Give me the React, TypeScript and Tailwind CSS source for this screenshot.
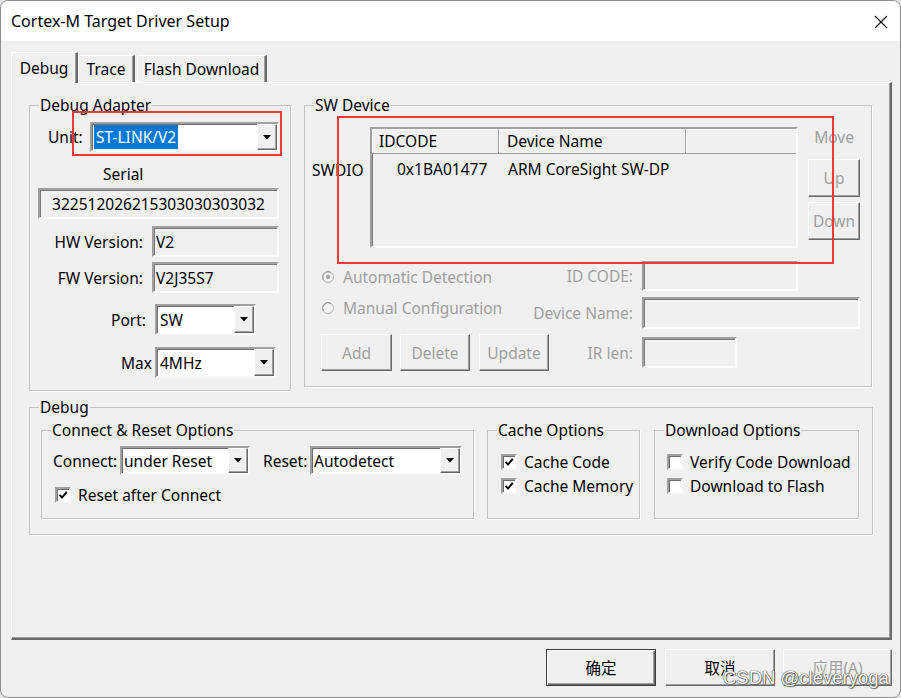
import React from "react";

type P = { className?: string; children?: React.ReactNode };

function Arrow() {
  return (
    <svg width="8" height="5" viewBox="0 0 8 5">
      <polygon points="0,0 8,0 4,4.5" fill="#000" />
    </svg>
  );
}

function Combo({ className = "", children }: P) {
  return (
    <div
      className={`flex items-stretch bg-white border-2 border-t-[#a0a0a0] border-l-[#a0a0a0] border-r-[#f7f7f7] border-b-[#f7f7f7] shadow-[inset_1px_1px_0_#6d6d6d] ${className}`}
    >
      <div className="flex-1 flex items-center pl-[2px] whitespace-nowrap overflow-hidden leading-[20px]">
        {children}
      </div>
      <div className="w-[20px] flex items-center justify-center bg-[#f0f0f0] border border-t-white border-l-white border-r-[#696969] border-b-[#696969] shadow-[inset_-1px_-1px_0_#a0a0a0]">
        <Arrow />
      </div>
    </div>
  );
}

function Field({ className = "", children }: P) {
  return (
    <div
      className={`flex items-center bg-[#f0f0f0] border-2 border-t-[#a0a0a0] border-l-[#a0a0a0] border-r-[#fbfbfb] border-b-[#fbfbfb] shadow-[inset_1px_1px_0_#7a7a7a] whitespace-nowrap overflow-hidden leading-[20px] ${className}`}
    >
      {children}
    </div>
  );
}

function Btn({ className = "", children }: P) {
  return (
    <div
      className={`flex items-center justify-center bg-[#f0f0f0] border border-t-white border-l-white border-r-[#696969] border-b-[#696969] shadow-[inset_-1px_-1px_0_#a0a0a0] leading-[20px] whitespace-nowrap ${className}`}
    >
      {children}
    </div>
  );
}

function Group({ label, className = "", children }: P & { label: string }) {
  return (
    <div className={`relative border border-[#c3c3c3] shadow-[1px_1px_0_#ffffff] ${className}`}>
      <span className="absolute top-[-11px] left-[9px] px-[1px] bg-[#f0f0f0] leading-[20px] whitespace-nowrap">
        {label}
      </span>
      {children}
    </div>
  );
}

function Check({ checked }: { checked?: boolean }) {
  return (
    <div className="w-[16px] h-[16px] shrink-0 bg-white border-2 border-t-[#a0a0a0] border-l-[#a0a0a0] border-r-[#f7f7f7] border-b-[#f7f7f7] shadow-[inset_1px_1px_0_#6d6d6d] flex items-center justify-center">
      {checked && (
        <svg width="10" height="10" viewBox="0 0 10 10">
          <path d="M1.5 4.8 L4 7.5 L8.8 1.8" stroke="#000" strokeWidth="1.9" fill="none" />
        </svg>
      )}
    </div>
  );
}

function Radio({ checked }: { checked?: boolean }) {
  return (
    <svg width="14" height="14" viewBox="0 0 14 14" className="shrink-0">
      <circle cx="7" cy="7" r="5.5" fill="#f3f3f3" stroke="#b4b4b4" strokeWidth="1" />
      <path d="M2.5 10 A5.5 5.5 0 0 1 10 2.5" stroke="#9a9a9a" strokeWidth="1" fill="none" />
      {checked && <circle cx="7" cy="7" r="2" fill="#9c9c9c" />}
    </svg>
  );
}

export default function App() {
  return (
    <div className="relative w-[901px] h-[698px] bg-[#e4e4e4] text-[15.5px] text-black font-['Noto_Sans','Noto_Sans_CJK_SC',sans-serif]">
      <div className="w-[901px] h-[698px] flex flex-col bg-[#f0f0f0] border border-[#8f8f8f] rounded-[8px] overflow-hidden">
        {/* Title bar */}
        <div className="h-[40px] shrink-0 bg-white flex items-center justify-between">
          <span className="pl-[10px] text-[16px] leading-[20px]">Cortex-M Target Driver Setup</span>
          <div className="w-[39px] h-full flex items-center justify-center pt-[2px]">
            <svg width="14" height="14" viewBox="0 0 14 14">
              <path d="M1 1 L13 13 M13 1 L1 13" stroke="#111" strokeWidth="1.1" />
            </svg>
          </div>
        </div>

        {/* Body */}
        <div className="flex flex-col pl-[10px] pr-[8px] pt-[11px]">
          {/* Tabs */}
          <div className="flex items-end h-[30px]">
            <div className="relative z-10 -mb-[1px] w-[67px] h-[31px] bg-[#f0f0f0] flex items-center justify-center border-l border-t border-r-2 border-l-white border-t-white border-r-[#696969] shadow-[inset_-1px_0_0_#a0a0a0] rounded-tl-[2px] leading-[20px]">
              Debug
            </div>
            <div className="w-[57px] h-[27px] flex items-center justify-center border-l border-t border-r-2 border-l-white border-t-white border-r-[#696969] shadow-[inset_-1px_0_0_#a0a0a0] leading-[20px]">
              Trace
            </div>
            <div className="ml-[2px] w-[130px] h-[27px] flex items-center justify-center border-l border-t border-r-2 border-l-white border-t-white border-r-[#696969] shadow-[inset_-1px_0_0_#a0a0a0] leading-[20px] whitespace-nowrap">
              Flash Download
            </div>
          </div>

          {/* Panel */}
          <div className="h-[558px] flex flex-col pl-[17px] pt-[22px] border-l border-t border-r-2 border-b-2 border-l-white border-t-white border-r-[#696969] border-b-[#696969] shadow-[inset_-1px_-1px_0_#a0a0a0]">
            <div className="flex items-start gap-[13px]">
              {/* Debug Adapter */}
              <Group label="Debug Adapter" className="w-[262px] h-[286px] flex flex-col">
                <div className="mt-[16px] flex items-center">
                  <span className="ml-[18px] w-[42px] leading-[20px]">Unit:</span>
                  <Combo className="w-[189px] h-[30px]">
                    <span className="bg-[#0078d7] text-white px-[2px] leading-[24px]">ST-LINK/V2</span>
                  </Combo>
                </div>
                <div className="mt-[12px] ml-[73px] leading-[20px]">Serial</div>
                <Field className="mt-[4px] ml-[8px] w-[241px] h-[31px] justify-center">
                  322512026215303030303032
                </Field>
                <div className="mt-[7px] flex items-center">
                  <span className="w-[113px] text-right leading-[20px]">HW Version:</span>
                  <Field className="ml-[9px] w-[127px] h-[31px] pl-[2px]">V2</Field>
                </div>
                <div className="mt-[5px] flex items-center">
                  <span className="w-[113px] text-right leading-[20px]">FW Version:</span>
                  <Field className="ml-[9px] w-[127px] h-[31px] pl-[2px]">V2J35S7</Field>
                </div>
                <div className="mt-[11px] flex items-center">
                  <span className="w-[116px] text-right leading-[20px]">Port:</span>
                  <Combo className="ml-[9px] w-[101px] h-[31px]">
                    <span className="pl-[1px]">SW</span>
                  </Combo>
                </div>
                <div className="mt-[12px] flex items-center">
                  <span className="w-[122px] text-right leading-[20px]">Max</span>
                  <Combo className="ml-[3px] w-[121px] h-[31px]">
                    <span className="pl-[1px]">4MHz</span>
                  </Combo>
                </div>
              </Group>

              {/* SW Device */}
              <Group label="SW Device" className="w-[568px] h-[282px] flex flex-col">
                <div className="mt-[21px] flex items-start">
                  <span className="w-[65px] shrink-0 pl-[7px] mt-[33px] leading-[20px]">SWDIO</span>
                  <div className="w-[428px] h-[121px] shrink-0 flex flex-col overflow-hidden bg-[#f0f0f0] border-2 border-t-[#a0a0a0] border-l-[#a0a0a0] border-r-[#fbfbfb] border-b-[#fbfbfb] shadow-[inset_1px_1px_0_#7a7a7a]">
                    <div className="flex h-[25px] shrink-0 leading-[20px]">
                      <div className="w-[127px] flex items-center pl-[7px] border-r border-b border-r-[#a0a0a0] border-b-[#a0a0a0] shadow-[inset_1px_1px_0_#ffffff]">
                        IDCODE
                      </div>
                      <div className="w-[187px] flex items-center pl-[8px] border-r border-b border-r-[#a0a0a0] border-b-[#a0a0a0] shadow-[inset_1px_1px_0_#ffffff]">
                        Device Name
                      </div>
                      <div className="flex-1 border-b border-b-[#a0a0a0] shadow-[inset_1px_1px_0_#ffffff]" />
                    </div>
                    <div className="mt-[5px] flex leading-[20px] whitespace-nowrap">
                      <span className="w-[127px] pl-[25px]">0x1BA01477</span>
                      <span className="pl-[9px]">ARM CoreSight SW-DP</span>
                    </div>
                  </div>
                  <div className="ml-[10px] w-[52px] shrink-0 flex flex-col items-center">
                    <span className="leading-[20px] text-[#a0a0a0]">Move</span>
                    <Btn className="mt-[12px] w-[52px] h-[38px] text-[#a0a0a0]">Up</Btn>
                    <Btn className="mt-[5px] w-[52px] h-[38px] text-[#a0a0a0]">Down</Btn>
                  </div>
                </div>

                <div className="mt-[13px] h-[30px] flex items-center">
                  <div className="w-[215px] pl-[16px] mt-[2px] flex items-center text-[#a0a0a0] leading-[20px] whitespace-nowrap">
                    <Radio checked />
                    <span className="ml-[8px]">Automatic Detection</span>
                  </div>
                  <span className="w-[113px] text-right text-[#a0a0a0] leading-[20px] whitespace-nowrap">ID CODE:</span>
                  <Field className="ml-[9px] w-[156px] h-[30px]" />
                </div>
                <div className="mt-[6px] h-[32px] flex items-center">
                  <div className="w-[215px] pl-[16px] mb-[10px] flex items-center text-[#a0a0a0] leading-[20px] whitespace-nowrap">
                    <Radio />
                    <span className="ml-[8px]">Manual Configuration</span>
                  </div>
                  <span className="w-[113px] text-right text-[#a0a0a0] leading-[20px] whitespace-nowrap">Device Name:</span>
                  <Field className="ml-[9px] w-[218px] h-[32px]" />
                </div>
                <div className="mt-[5px] flex items-center">
                  <div className="w-[255px] pl-[16px] flex items-center text-[#a0a0a0]">
                    <Btn className="w-[71px] h-[37px]">Add</Btn>
                    <Btn className="ml-[8px] w-[70px] h-[37px]">Delete</Btn>
                    <Btn className="ml-[9px] w-[70px] h-[37px]">Update</Btn>
                  </div>
                  <span className="w-[73px] text-right text-[#a0a0a0] leading-[20px] whitespace-nowrap">IR len:</span>
                  <Field className="ml-[9px] w-[95px] h-[31px]" />
                </div>
              </Group>
            </div>

            {/* Debug group */}
            <Group label="Debug" className="mt-[16px] w-[844px] h-[128px] flex flex-col">
              <div className="mt-[22px] ml-[11px] flex items-start">
                <Group label="Connect & Reset Options" className="w-[433px] h-[89px] flex flex-col">
                  <div className="mt-[15px] ml-[11px] flex items-center">
                    <span className="w-[67px] leading-[20px]">Connect:</span>
                    <Combo className="w-[130px] h-[29px]">under Reset</Combo>
                    <span className="ml-[13px] w-[47px] leading-[20px]">Reset:</span>
                    <Combo className="w-[152px] h-[29px]">Autodetect</Combo>
                  </div>
                  <div className="mt-[12px] ml-[13px] h-[16px] flex items-center">
                    <Check checked />
                    <span className="ml-[7px] leading-[20px]">Reset after Connect</span>
                  </div>
                </Group>
                <Group label="Cache Options" className="ml-[13px] w-[153px] h-[89px] flex flex-col">
                  <div className="mt-[21px] ml-[13px] h-[20px] flex items-center">
                    <Check checked />
                    <span className="ml-[7px] leading-[20px] whitespace-nowrap">Cache Code</span>
                  </div>
                  <div className="mt-[4px] ml-[13px] h-[20px] flex items-center">
                    <Check checked />
                    <span className="ml-[7px] leading-[20px] whitespace-nowrap">Cache Memory</span>
                  </div>
                </Group>
                <Group label="Download Options" className="ml-[14px] w-[205px] h-[89px] flex flex-col">
                  <div className="mt-[21px] ml-[12px] h-[20px] flex items-center">
                    <Check />
                    <span className="ml-[7px] w-[162px] overflow-hidden leading-[20px] whitespace-nowrap">Verify Code Download</span>
                  </div>
                  <div className="mt-[4px] ml-[12px] h-[20px] flex items-center">
                    <Check />
                    <span className="ml-[7px] leading-[20px] whitespace-nowrap">Download to Flash</span>
                  </div>
                </Group>
              </div>
            </Group>
          </div>

          {/* Bottom buttons */}
          <div className="mt-[9px] flex justify-end">
            <div className="w-[110px] h-[37px] flex items-center justify-center bg-[#f0f0f0] border border-[#3c3c3c] shadow-[inset_1px_1px_0_#ffffff,inset_-1px_-1px_0_#696969,inset_-2px_-2px_0_#a0a0a0] leading-[20px]">
              确定
            </div>
            <Btn className="ml-[9px] w-[110px] h-[37px]">取消</Btn>
            <Btn className="ml-[8px] w-[109px] h-[37px] text-[#a0a0a0]">应用(A)</Btn>
          </div>
        </div>
      </div>

      {/* Red annotation rectangles */}
      <div className="absolute left-[72px] top-[111px] w-[210px] h-[45px] border-2 border-[#f03a3a] pointer-events-none" />
      <div className="absolute left-[337px] top-[116px] w-[497px] h-[148px] border-2 border-[#f03a3a] pointer-events-none" />

      {/* Watermark */}
      <div className="absolute left-[723px] top-[665px] text-[18.5px] leading-[26px] font-['Liberation_Sans',sans-serif] text-white [text-shadow:0_0_1px_#333,0_0_1px_#333,1px_1px_1px_#777] whitespace-nowrap pointer-events-none">
        CSDN @cleveryoga
      </div>
    </div>
  );
}
